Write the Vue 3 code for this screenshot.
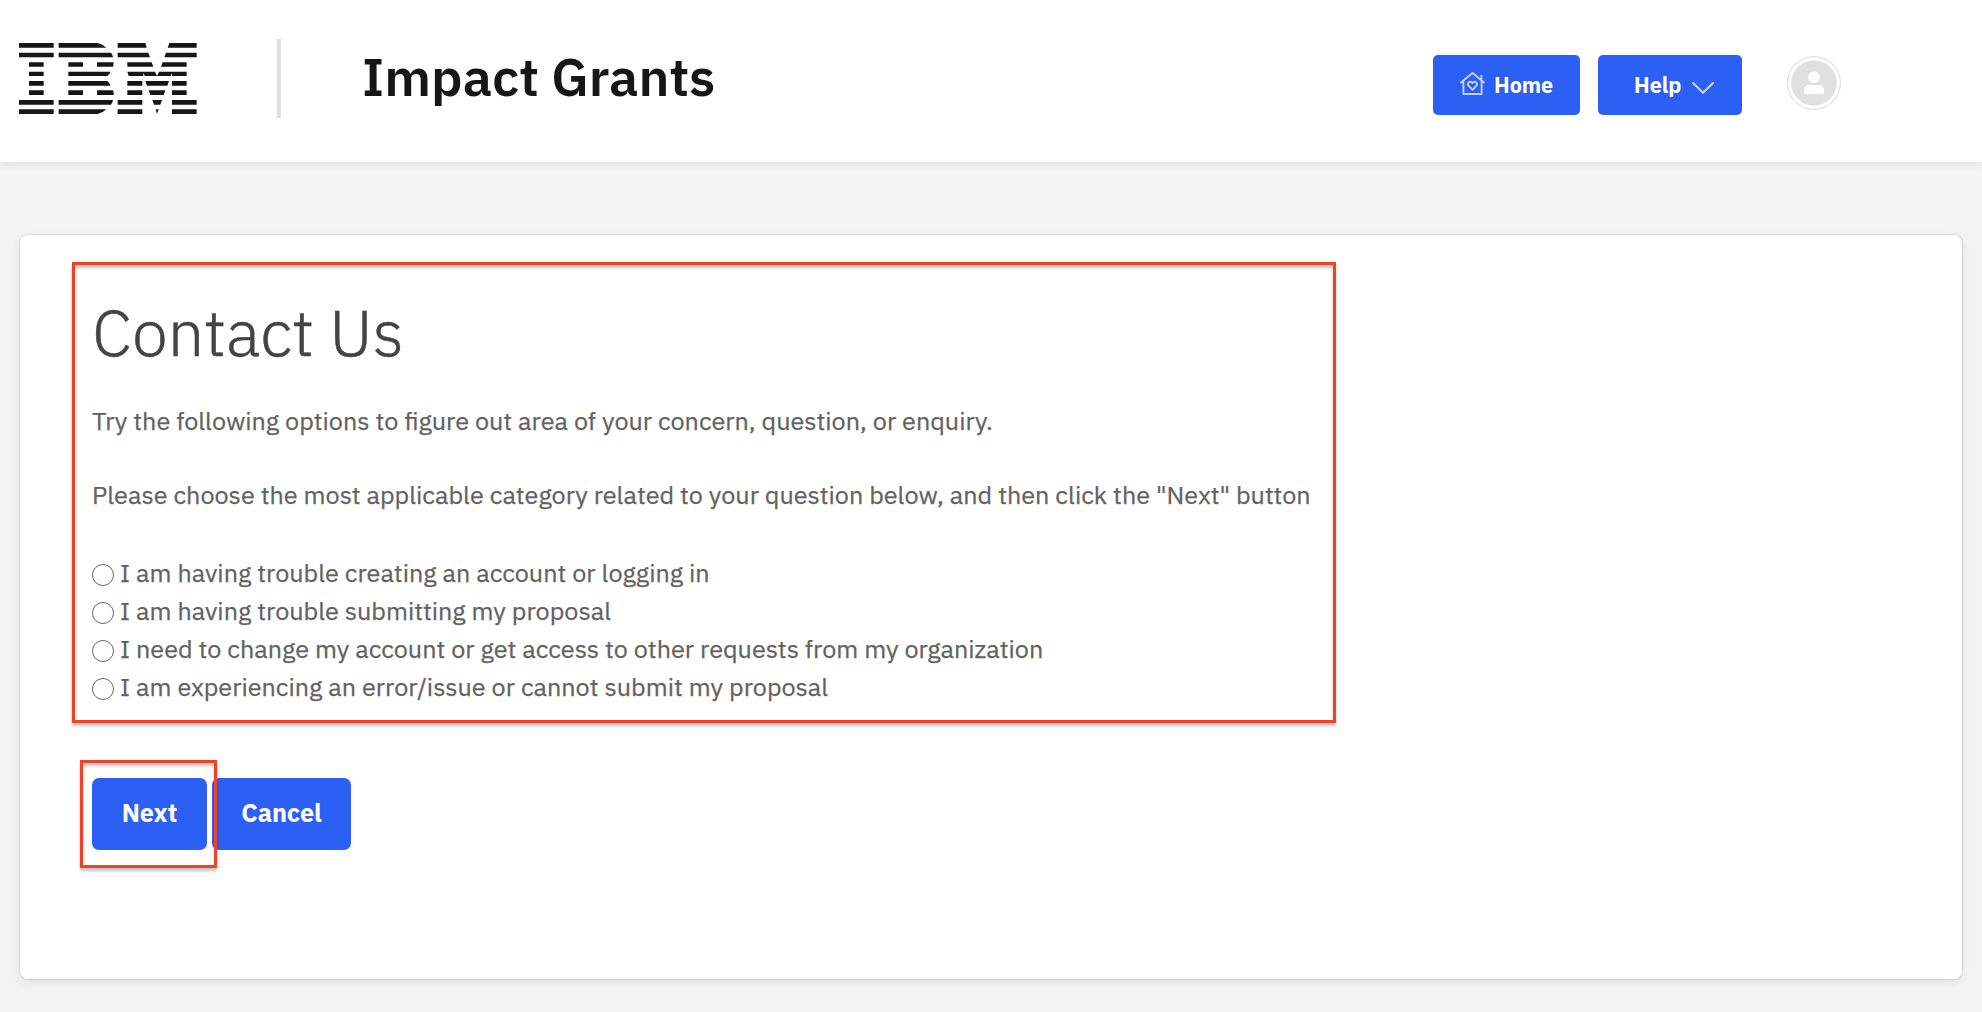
<script setup>
const options = [
  { id: 'account', text: 'I am having trouble creating an account or logging in' },
  { id: 'submit', text: 'I am having trouble submitting my proposal' },
  { id: 'access', text: 'I need to change my account or get access to other requests from my organization' },
  { id: 'error', text: 'I am experiencing an error/issue or cannot submit my proposal' },
]
</script>

<template>
  <div class="page">
    <header class="header">
      <svg class="logo" viewBox="57 66 534 219" aria-label="IBM">
        <g fill="#161616">
          <path d="M57 69h104v14H57zM57 98h104v14H57zM87 127h44v13H87zM87 155h44v13H87zM87 183h44v14H87zM87 211h44v14H87zM57 240h104v14H57zM57 268h104v14H57z" />
          <path d="M176 69h117q15 3 26 14H176zM176 98h157q5 6 6 14H176zM205 127h44v13h-44zM291 127h50q0 7-2 13h-48zM205 155h127q-4 8-10 13H205zM205 183h117q6 5 10 14H205zM205 211h44v14h-44zM291 211h48q3 7 2 14h-50zM176 240h163q-1 8-6 14H176zM176 268h143q-11 11-26 14H176z" />
          <path d="M353 69h83l4 14h-87zM353 98h92l5 14h-97zM382 127h73l5 13h-78zM382 155h83l6 13 6-13h83v13h-44v-10l-4 10h-34h-10h-34l-4-10v10h-44zM508 69h82v14h-87zM498 98h92v14h-97zM488 127h72v13h-77zM382 183h45v14h-45zM436 183h71l-5 14h-61zM516 183h44v14h-44zM382 211h45v14h-45zM446 211h50l-5 14h-40zM516 211h44v14h-44zM353 240h74v14h-74zM457 240h29l-5 14h-19zM516 240h74v14h-74zM353 268h74v14h-74zM467 268h9l-5 14zM516 268h74v14h-74z" />
        </g>
      </svg>
      <span class="divider"></span>
      <h1 class="title">Impact Grants</h1>
      <nav class="nav">
        <button class="nav-btn home" type="button">
          <svg class="home-icon" viewBox="0 0 25 24" fill="none" stroke="#c6d4fd" stroke-width="1.8" stroke-linejoin="round" stroke-linecap="round">
            <path d="M1 10.5 12.5 1 24 10.5M3.4 9v13h18.2V9M21.4 8V3.7" />
            <path d="M12.5 17.8 8.5 13.6c-1.8-2.3 1.4-5.5 4-2.6 2.6-2.9 5.8.3 4 2.6z" />
          </svg>
          <span class="home-text">Home</span>
        </button>
        <button class="nav-btn help" type="button">
          <span class="help-text">Help</span>
          <svg class="chevron" viewBox="0 0 22 12" fill="none" stroke="#c6d4fd" stroke-width="2.1" stroke-linecap="round" stroke-linejoin="round">
            <path d="M1 1 11 10.8 21 1" />
          </svg>
        </button>
        <svg class="avatar" viewBox="0 0 54 54">
          <circle cx="27" cy="27" r="26.4" fill="#fff" stroke="#e0e0e0" stroke-width="1.2" />
          <circle cx="27" cy="27" r="22.8" fill="#e0e0e0" />
          <circle cx="27" cy="21.4" r="5.8" fill="#fff" />
          <path d="M17 36v-2a5 5 0 0 1 5-5h10a5 5 0 0 1 5 5v2a2 2 0 0 1-2 2H19a2 2 0 0 1-2-2z" fill="#fff" />
        </svg>
      </nav>
    </header>

    <main class="card">
      <section class="question">
        <h2 class="heading">Contact Us</h2>
        <p class="para">Try the following options to figure out area of your concern, question, or enquiry.</p>
        <p class="para">Please choose the most applicable category related to your question below, and then click the "Next" button</p>
        <div class="options">
          <label v-for="o in options" :key="o.id" class="option">
            <input class="radio" type="radio" name="category" :value="o.id" />
            <span class="label">{{ o.text }}</span>
          </label>
        </div>
      </section>
      <div class="actions">
        <button class="btn next" type="button">Next</button>
        <button class="btn cancel" type="button">Cancel</button>
        <span class="marker"></span>
      </div>
    </main>
  </div>
</template>

<style>
body { background: #f3f3f3; }
</style>

<style scoped>
.page {
  box-sizing: border-box;
  height: 1012px;
  overflow: hidden;
  background: #f3f3f3;
  font-family: "IBM Plex Sans", Roboto, "Liberation Sans", sans-serif;
}
.header {
  box-sizing: border-box;
  display: flex;
  align-items: flex-start;
  height: 162px;
  padding-left: 19px;
  background: #fff;
  box-shadow: 0 2px 8px rgba(0, 0, 0, 0.08);
}
.logo { width: 178px; height: 73px; margin-top: 42px; }
.divider { width: 4px; height: 79px; margin: 39px 0 0 80px; background: #e0e0e0; }
.title {
  margin: 46px 0 0 81px;
  font-size: 52.7px;
  font-weight: 600;
  line-height: 60px;
  color: #161616;
  white-space: nowrap;
}
.nav { display: flex; margin: 55px 141px 0 auto; }
.nav-btn {
  box-sizing: border-box;
  display: flex;
  align-items: flex-start;
  height: 60px;
  padding: 0;
  border: 0;
  border-radius: 5px;
  background: #2c60f5;
  color: #fff;
  font: 700 21.6px/60px "IBM Plex Sans", Roboto, sans-serif;
}
.home { width: 147px; padding-left: 27px; }
.help { width: 144px; margin-left: 18px; padding-left: 36px; }
.home-icon { width: 25px; height: 24px; margin: 17px 9px 0 0; }
.chevron { width: 22px; height: 12px; margin: 27px 0 0 11px; }
.avatar { width: 54px; height: 54px; margin: 1px 0 0 45px; }
.card {
  box-sizing: border-box;
  height: 744px;
  margin: 73px 20px 0;
  padding: 27px 0 0 52px;
  border-radius: 8px;
  background: #fff;
  box-shadow: 0 0 1px 1px rgba(0, 0, 0, 0.09), 0 3px 10px rgba(0, 0, 0, 0.08);
}
.question {
  box-sizing: border-box;
  width: 1264px;
  height: 461px;
  padding-left: 17px;
  border: 3px solid #ec4428;
  box-shadow: 0 3px 3px rgba(0, 0, 0, 0.24), inset 0 3px 3px rgba(0, 0, 0, 0.24);
}
.heading {
  margin: 27px 0 0;
  height: 92px;
  font-size: 64.8px;
  font-weight: 300;
  line-height: 80px;
  color: #444;
  -webkit-text-stroke: 0.5px #444;
}
.para {
  margin: 0;
  height: 74px;
  font-size: 25.2px;
  line-height: 74px;
  color: #626262;
  -webkit-text-stroke: 0.25px #626262;
  white-space: nowrap;
}
.options { margin-top: 22px; }
.option { display: flex; height: 38px; align-items: flex-start; }
.radio {
  appearance: none;
  box-sizing: border-box;
  flex: none;
  width: 22px;
  height: 22px;
  margin: 10px 6px 0 0;
  border: 1.5px solid #666;
  border-radius: 50%;
  background: #fff;
}
.label {
  font-size: 25.2px;
  line-height: 38px;
  color: #626262;
  -webkit-text-stroke: 0.25px #626262;
  white-space: nowrap;
}
.actions { position: relative; display: flex; gap: 5px; margin: 55px 0 0 20px; }
.btn {
  height: 72px;
  padding: 0 0 2px;
  border: 0;
  border-radius: 7px;
  background: #2c60f5;
  color: #fff;
  font: 700 25.2px/70px "IBM Plex Sans", Roboto, sans-serif;
}
.next { width: 115px; }
.cancel { width: 139px; }
.marker {
  position: absolute;
  box-sizing: border-box;
  top: -18px;
  left: -12px;
  width: 137px;
  height: 108px;
  border: 3px solid #ec4428;
  box-shadow: 0 3px 3px rgba(0, 0, 0, 0.24), inset 0 3px 3px rgba(0, 0, 0, 0.24);
}
</style>
